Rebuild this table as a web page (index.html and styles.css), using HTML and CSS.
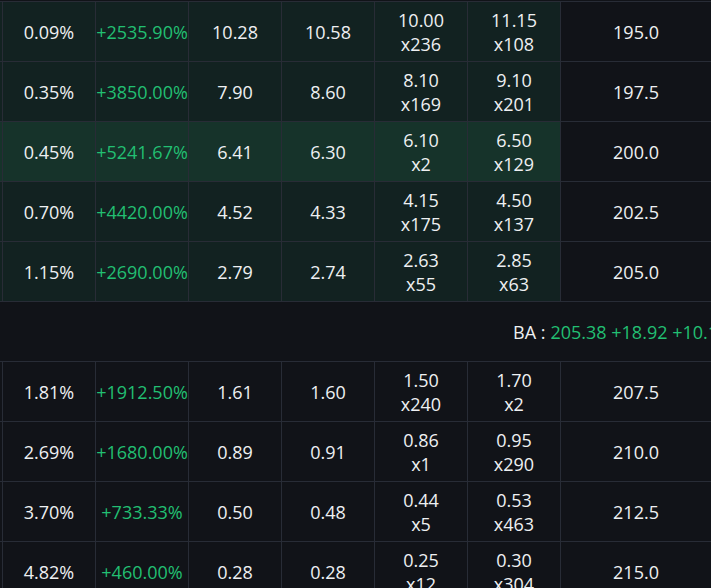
FILE: index.html
```html
<!DOCTYPE html>
<html>
<head>
<meta charset="utf-8">
<link rel="stylesheet" href="styles.css">
</head>
<body>
<div class="chain">
  <div class="row itm">
    <div class="edge"></div>
    <div class="cell">0.09%</div>
    <div class="cell up">+2535.90%</div>
    <div class="cell">10.28</div>
    <div class="cell">10.58</div>
    <div class="cell two"><span>10.00</span><span>x236</span></div>
    <div class="cell two"><span>11.15</span><span>x108</span></div>
    <div class="cell strike">195.0</div>
  </div>
  <div class="row itm">
    <div class="edge"></div>
    <div class="cell">0.35%</div>
    <div class="cell up">+3850.00%</div>
    <div class="cell">7.90</div>
    <div class="cell">8.60</div>
    <div class="cell two"><span>8.10</span><span>x169</span></div>
    <div class="cell two"><span>9.10</span><span>x201</span></div>
    <div class="cell strike">197.5</div>
  </div>
  <div class="row itm active">
    <div class="edge"></div>
    <div class="cell">0.45%</div>
    <div class="cell up">+5241.67%</div>
    <div class="cell">6.41</div>
    <div class="cell">6.30</div>
    <div class="cell two"><span>6.10</span><span>x2</span></div>
    <div class="cell two"><span>6.50</span><span>x129</span></div>
    <div class="cell strike">200.0</div>
  </div>
  <div class="row itm">
    <div class="edge"></div>
    <div class="cell">0.70%</div>
    <div class="cell up">+4420.00%</div>
    <div class="cell">4.52</div>
    <div class="cell">4.33</div>
    <div class="cell two"><span>4.15</span><span>x175</span></div>
    <div class="cell two"><span>4.50</span><span>x137</span></div>
    <div class="cell strike">202.5</div>
  </div>
  <div class="row itm">
    <div class="edge"></div>
    <div class="cell">1.15%</div>
    <div class="cell up">+2690.00%</div>
    <div class="cell">2.79</div>
    <div class="cell">2.74</div>
    <div class="cell two"><span>2.63</span><span>x55</span></div>
    <div class="cell two"><span>2.85</span><span>x63</span></div>
    <div class="cell strike">205.0</div>
  </div>
  <div class="price-row">
    <span class="label">BA :</span>
    <span class="up">205.38 +18.92 +10.15%</span>
  </div>
  <div class="row">
    <div class="edge"></div>
    <div class="cell">1.81%</div>
    <div class="cell up">+1912.50%</div>
    <div class="cell">1.61</div>
    <div class="cell">1.60</div>
    <div class="cell two"><span>1.50</span><span>x240</span></div>
    <div class="cell two"><span>1.70</span><span>x2</span></div>
    <div class="cell strike">207.5</div>
  </div>
  <div class="row">
    <div class="edge"></div>
    <div class="cell">2.69%</div>
    <div class="cell up">+1680.00%</div>
    <div class="cell">0.89</div>
    <div class="cell">0.91</div>
    <div class="cell two"><span>0.86</span><span>x1</span></div>
    <div class="cell two"><span>0.95</span><span>x290</span></div>
    <div class="cell strike">210.0</div>
  </div>
  <div class="row">
    <div class="edge"></div>
    <div class="cell">3.70%</div>
    <div class="cell up">+733.33%</div>
    <div class="cell">0.50</div>
    <div class="cell">0.48</div>
    <div class="cell two"><span>0.44</span><span>x5</span></div>
    <div class="cell two"><span>0.53</span><span>x463</span></div>
    <div class="cell strike">212.5</div>
  </div>
  <div class="row">
    <div class="edge"></div>
    <div class="cell">4.82%</div>
    <div class="cell up">+460.00%</div>
    <div class="cell">0.28</div>
    <div class="cell">0.28</div>
    <div class="cell two"><span>0.25</span><span>x12</span></div>
    <div class="cell two"><span>0.30</span><span>x304</span></div>
    <div class="cell strike">215.0</div>
  </div>
</div>
</body>
</html>
```

FILE: styles.css
```css
html, body {
  margin: 0;
  padding: 0;
  background: #111318;
  overflow: hidden;
}

body {
  font-family: "Open Sans", "Noto Sans", sans-serif;
  font-size: 18px;
  color: #eef0f2;
  width: 711px;
  height: 588px;
}

.chain {
  width: 800px;
  padding-top: 1px;
}

.row {
  display: grid;
  grid-template-columns: 2px repeat(6, 93px) 151px;
  height: 60px;
  box-sizing: border-box;
  border-top: 1px solid #282c36;
  background: #111318;
}

.row.itm {
  background: #122221;
}

.row.active {
  background: #16332a;
}

.cell {
  border-left: 1px solid #282c36;
  display: flex;
  align-items: center;
  justify-content: center;
  white-space: nowrap;
  overflow: hidden;
  line-height: 24px;
}

.cell.two {
  flex-direction: column;
}

.cell.strike {
  background: #111318;
}

.up {
  color: #22bf72;
}

.price-row {
  height: 60px;
  box-sizing: border-box;
  border-top: 1px solid #282c36;
  display: flex;
  align-items: center;
  padding-left: 513px;
  white-space: nowrap;
  gap: 5px;
}

.label {
  color: #eef0f2;
}
```
